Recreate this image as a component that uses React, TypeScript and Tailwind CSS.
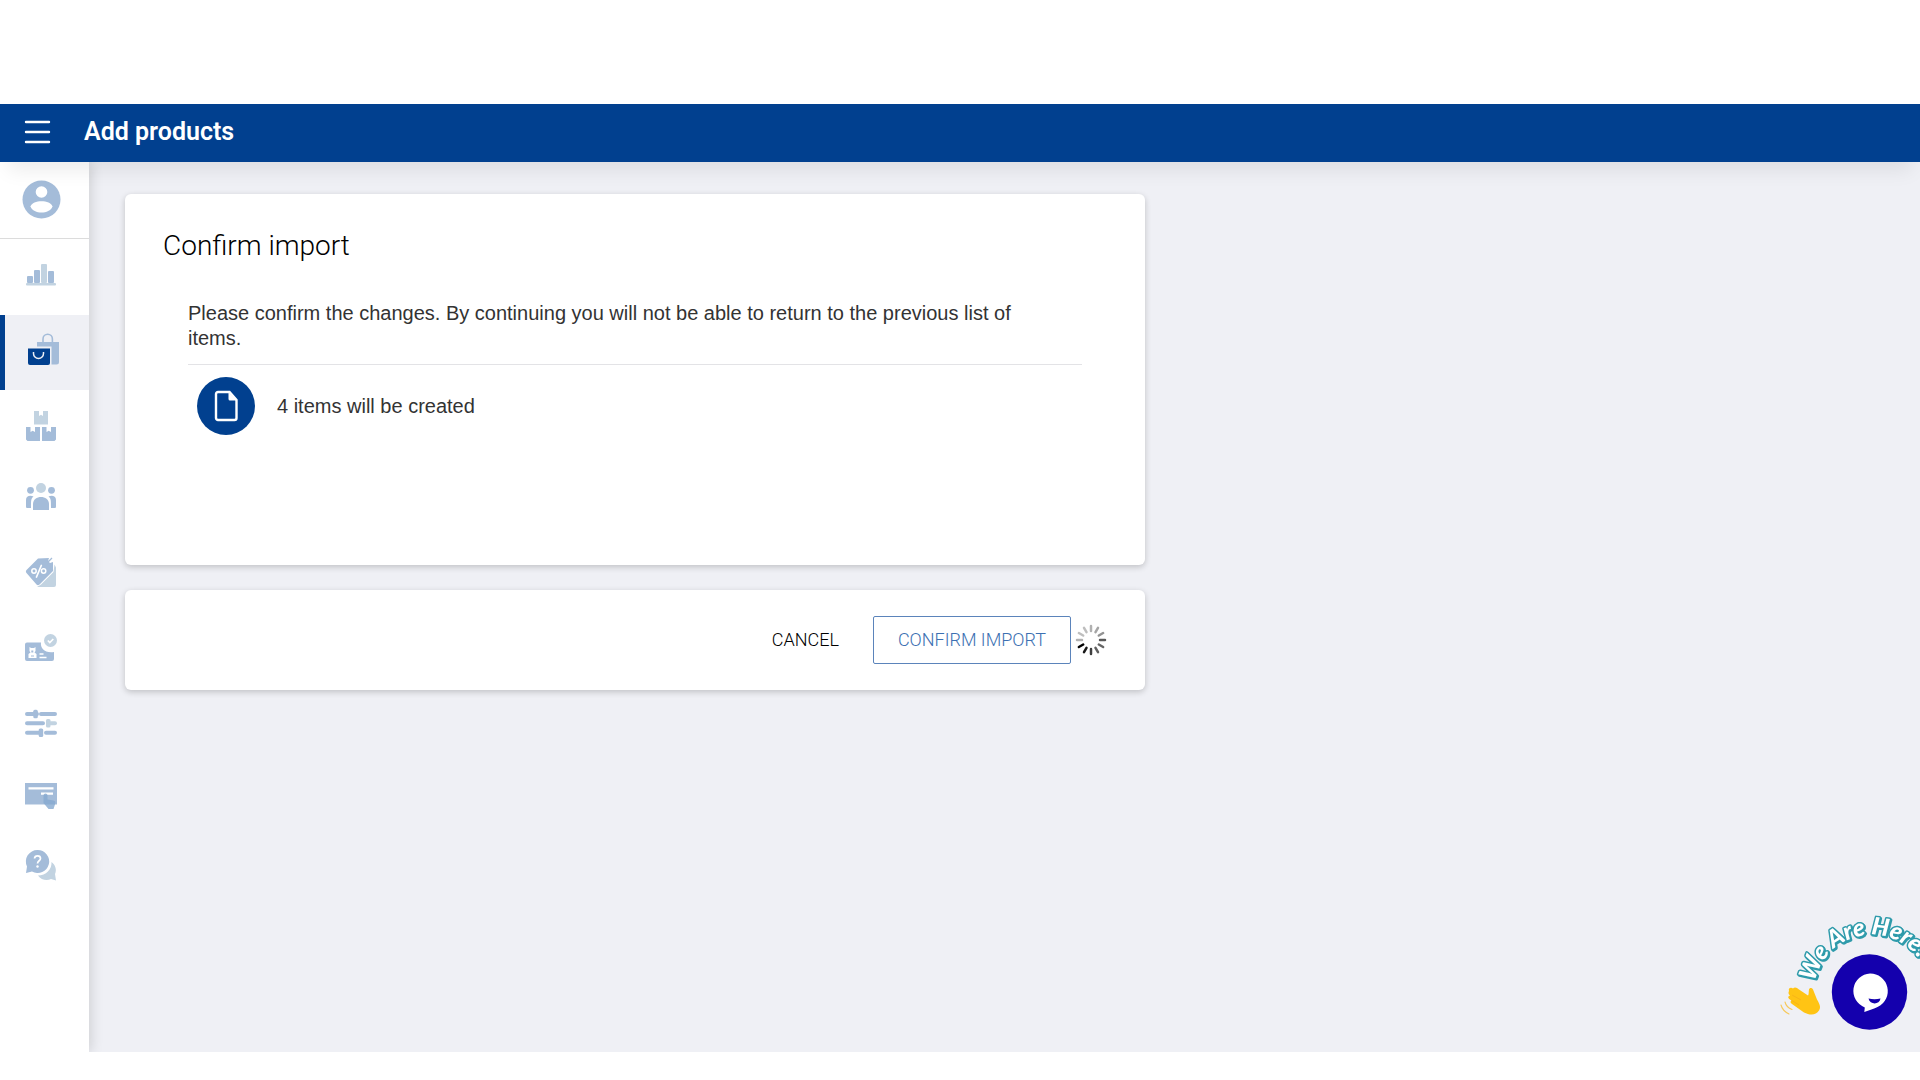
import React from "react";

const BLUE = "#a4bcd9";
const PALE = "#c2d3e1";

interface NavItem {
  label: string;
  active?: boolean;
  className: string;
  icon: React.ReactNode;
}

const navItems: NavItem[] = [
  {
    label: "Reports",
    className: "h-[76px]",
    icon: (
      <>
        <rect x="27" y="37" width="6" height="7" rx="1" fill={BLUE} />
        <rect x="34" y="31" width="6" height="13" rx="1" fill={BLUE} />
        <rect x="41" y="25" width="6" height="19" rx="1" fill={PALE} />
        <rect x="48" y="32" width="6" height="12" rx="1" fill={BLUE} />
        <rect x="26" y="44" width="30" height="2.500" rx="1" fill={PALE} />
      </>
    ),
  },
  {
    label: "Items",
    active: true,
    className: "h-[75px] bg-[#eff0f5] border-l-[5px] border-[#01408f] *:-ml-[5px]",
    icon: (
      <>
        <path d="M37 27h22v20a2.500 2.500 0 0 1-2.500 2.500H37z" fill={BLUE} />
        <path d="M43 27v-3a4.700 4.700 0 0 1 9.400 0v3" fill="none" stroke={BLUE} strokeWidth="1.600" />
        <path d="M26.500 31.500h25v19h-25z" fill="#eff0f5" />
        <path d="M28 33.500h22v14.500a2 2 0 0 1-2 2H30a2 2 0 0 1-2-2z" fill="#01408f" />
        <path d="M33.500 37v1.500a5 5 0 0 0 10 0v-1.500" fill="none" stroke="#eff0f5" strokeWidth="1.500" />
      </>
    ),
  },
  {
    label: "Inventory",
    className: "h-[74px]",
    icon: (
      <>
        <path d="M34 21h5v5l2-1.200 2 1.200v-5h5v13.500H34z" fill={PALE} />
        <path d="M26 37h4.500v5l2.200-1.200L35 42v-5h5v14H27.500L26 49.500z" fill={BLUE} />
        <path d="M42 37h4.500v5l2.200-1.200L51 42v-5h5v12.500L54.500 51H42z" fill={BLUE} />
      </>
    ),
  },
  {
    label: "Employees",
    className: "h-[74px]",
    icon: (
      <>
        <circle cx="41" cy="24" r="5" fill={PALE} />
        <circle cx="30.500" cy="26.300" r="3.400" fill={BLUE} />
        <circle cx="51.500" cy="26.300" r="3.400" fill={BLUE} />
        <path d="M33 46v-6c0-9.500 16-9.500 16 0v6z" fill={BLUE} />
        <path d="M33.500 32.500c-2.500 1.800-2.500 4-2.500 11.500h-4c-1 0-1-1-1-2v-6c0-4 4-5 7.500-3.500z" fill={BLUE} />
        <path d="M48.500 32.500c2.500 1.800 2.500 4 2.500 11.500h4c1 0 1-1 1-2v-6c0-4-4-5-7.500-3.500z" fill={BLUE} />
      </>
    ),
  },
  {
    label: "Discounts",
    className: "h-[74px]",
    icon: (
      <>
        <path d="M54.500 26.500l1.500 3V47a2 2 0 0 1-2 2H37l4-2.500L53.500 34z" fill={PALE} />
        <path d="M38 20.500L49 20l-1 3 2 2 3-1v9L39.500 46.500c-1 1-2 1-3 0L26.500 35c-.8-1-.8-2 0-3z" fill={BLUE} />
        <path d="M47 25l5-5M48 22.500v3.500h3" fill="none" stroke={BLUE} strokeWidth="1.300" />
        <path d="M41.300 27.500L36.500 39" fill="none" stroke="#fff" strokeWidth="1.700" strokeLinecap="round" />
        <circle cx="34" cy="33" r="2.200" fill="none" stroke="#fff" strokeWidth="1.500" />
        <circle cx="43.600" cy="33" r="2.200" fill="none" stroke="#fff" strokeWidth="1.500" />
      </>
    ),
  },
  {
    label: "Loyalty",
    className: "h-[74px]",
    icon: (
      <>
        <path d="M27 30.500h14c-1 5.500 4 11 13 9.500v7a2 2 0 0 1-2 2H27a2 2 0 0 1-2-2v-14.500a2 2 0 0 1 2-2z" fill={BLUE} />
        <circle cx="50.500" cy="28.500" r="6.500" fill={PALE} />
        <path d="M47.800 28.500l2 2 3.500-3.500" fill="none" stroke="#fff" strokeWidth="1.700" />
        <path d="M29.500 35l1.500 1h3l1.500-1v4l-1 1.500 2 1.500v4h-8v-4l2-1.500-1-1.500z" fill="#fff" />
        <path d="M31.300 38.500h2v2h-2zM31 43.500h3v1h-3z" fill={BLUE} />
        <path d="M39.500 42h4M39.500 45.500h7" fill="none" stroke="#fff" strokeWidth="1.400" />
      </>
    ),
  },
  {
    label: "Settings",
    className: "h-[74px]",
    icon: (
      <>
        <path d="M27 28h10M41 28h14M27 37.300h16M27 46.700h13M46 46.700h9" stroke={BLUE} strokeWidth="4" strokeLinecap="round" />
        <path d="M50 37.300h5" stroke={PALE} strokeWidth="4" strokeLinecap="round" />
        <rect x="33.300" y="23.700" width="4.500" height="8.500" rx="1.500" fill={BLUE} />
        <rect x="46" y="33" width="4.500" height="8.500" rx="1.500" fill={PALE} />
        <rect x="38.700" y="42.400" width="4.500" height="8.500" rx="1.500" fill={BLUE} />
      </>
    ),
  },
  {
    label: "Integrations",
    className: "h-[74px]",
    icon: (
      <>
        <path d="M25 23h32v21.500H25z" fill={BLUE} />
        <path d="M28.500 28.300h25M41 33.700h12" fill="none" stroke="#fff" strokeWidth="2.200" />
        <path d="M43.500 35.500a2 2 0 0 1 4 0v4l6 1c2 .5 2 1.500 1.500 4l-1.500 4.500h-5l-5-6z" fill="#86a9cf" opacity="0.800" />
      </>
    ),
  },
  {
    label: "Help",
    className: "h-[74px]",
    icon: (
      <>
        <path d="M51.500 28c4 3 5.500 8 3.500 12l1 6.500-5-1.500c-4 2-10 1-13-3.500 8 0 14-6 13.500-13.500z" fill={PALE} />
        <path d="M37.500 16a11.500 11.500 0 1 1-5.500 21.500L26 39l1-6.500A11.500 11.500 0 0 1 37.500 16z" fill={BLUE} />
        <path d="M34.500 24.500c.3-3.500 6-3.500 6 0 0 2.300-3 2.300-3 5" fill="none" stroke="#fff" strokeWidth="1.700" />
        <circle cx="37.500" cy="32.500" r="1.200" fill="#fff" />
      </>
    ),
  },
];

const Sidebar = () => {
  return (
    <aside className="relative w-[89px] shrink-0 bg-white shadow-[2px_0_12px_rgba(0,0,0,0.14)]">
      <a
        href="#account"
        aria-label="Account"
        className="block h-[77px] overflow-hidden border-b border-[#dcdcdc]"
      >
        <svg viewBox="0 0 90 76" className="w-[90px] h-[76px] max-w-none">
          <circle cx="41.500" cy="37.500" r="19" fill={BLUE} />
          <circle cx="41.500" cy="30" r="5.800" fill="#fff" />
          <path d="M30.500 44.500c2-7 20-7 22 0-3 8-19 8-22 0z" fill="#fff" />
        </svg>
      </a>
      <nav>
        {navItems.map((item) => (
          <a
            key={item.label}
            href="#nav"
            aria-label={item.label}
            aria-current={item.active ? "page" : undefined}
            className={`block overflow-hidden ${item.className}`}
          >
            <svg viewBox="0 0 90 74" className="w-[90px] h-[74px] max-w-none">
              {item.icon}
            </svg>
          </a>
        ))}
      </nav>
    </aside>
  );
};

const spokes = [0.3, 0.35, 0.42, 0.65, 0.6, 0.62, 0.75, 0.9, 1, 0.3, 0.25, 0.25];

const Spinner = () => (
  <svg viewBox="-16 -16 32 32" className="w-8 h-8" role="img" aria-label="Loading">
    {spokes.map((opacity, i) => (
      <line
        key={i}
        x1="0"
        y1="-9"
        x2="0"
        y2="-14"
        stroke="#000"
        strokeWidth="2.500"
        strokeLinecap="round"
        opacity={opacity}
        transform={`rotate(${i * 30})`}
      />
    ))}
  </svg>
);

const ChatWidget = () => (
  <button
    type="button"
    aria-label="Open chat"
    className="absolute right-0 bottom-0 z-20 w-[150px] h-[152px] cursor-pointer"
  >
    <svg viewBox="0 0 150 152" className="w-full h-full">
      <defs>
        <path id="arc" d="M45 82A58 58 0 0 1 160 92.500" />
      </defs>
      <text
        fontFamily="Lato, sans-serif"
        fontWeight="900"
        fontStyle="italic"
        fontSize="24"
        fill="#fff"
        stroke="#2f9bab"
        strokeWidth="3"
        strokeLinejoin="round"
        paintOrder="stroke"
        className="drop-shadow-[1px_1px_0_#2f9bab]"
      >
        <textPath href="#arc">We Are Here!</textPath>
      </text>

      <path
        d="M19 91c-1-3 2-4 4-2.500 2-2 4-.5 6 1l9 6c1-1 .5-3 1-6 .5-2 3-2 4 0l4 10c3 5 4 8 2 11-3 5-9 5-15 2L22 104c-2-1-2-3 0-3.500-4-1.500-5-4-2-5-1.500-1-2-3-1-4.500z"
        fill="#ffc414"
      />
      <path
        d="M22 95l9 5M21 100l8 5"
        fill="none"
        stroke="#f5ae1b"
        strokeWidth="0.700"
      />
      <path
        d="M15 102c1 4 3 6 7 7.500M11 105c1 4 4 7 8 9"
        fill="none"
        stroke="#f6c95c"
        strokeWidth="1.100"
        strokeLinecap="round"
      />

      <circle cx="99.500" cy="92" r="37.700" fill="#1400ad" />
      <path
        d="M100 73.500a17.500 17.500 0 0 1 8 33.200c-4 2-9 3.500-13.700 5.300l.5-4.600A17.500 17.500 0 0 1 100 73.500z"
        fill="#fff"
      />
      <path d="M98.500 98.500c4 1 8 1 12 0-1 6.500-10.500 6.500-12 0z" fill="#1400ad" />
    </svg>
  </button>
);

const App = () => {
  return (
    <div className="flex min-h-screen flex-col bg-white pt-[104px] pb-7 font-[Roboto,sans-serif]">
      <header className="relative z-20 flex h-[58px] items-center bg-[#01408f] pb-0.5 pl-6 shadow-[0_16px_20px_-8px_rgba(0,0,0,0.08)]">
        <button type="button" aria-label="Menu" className="cursor-pointer">
          <svg viewBox="0 0 28 24" className="w-7 h-6">
            <path
              d="M2 2h23M2 12h23M2 22h23"
              stroke="#fff"
              strokeWidth="2.400"
              strokeLinecap="round"
            />
          </svg>
        </button>
        <h1 className="ml-8 text-[25px] leading-8 font-semibold text-white">
          Add products
        </h1>
      </header>

      <div className="relative flex flex-1 overflow-hidden bg-[#eff0f5]">
        <Sidebar />

        <main className="flex-1 pl-9 pt-8 pr-6 pb-8">
          <div className="flex w-full max-w-[1020px] flex-col gap-[25px]">
            <section className="rounded-md bg-white px-[38px] pt-9 pb-[130px] shadow-[0_2px_6px_rgba(0,0,0,0.2)]">
              <h2 className="text-[28px] leading-8 font-light text-black">
                Confirm import
              </h2>

              <div className="mt-[39px] px-[25px] font-['Liberation_Sans',Arial,sans-serif] text-xl leading-[25px] text-[#333]">
                <p className="border-b border-[#e3e3e6] pr-10 pb-[13px]">
                  Please confirm the changes. By continuing you will not be able
                  to return to the previous list of items.
                </p>
                <div className="flex items-center gap-[22px] pl-[9px] pt-3">
                  <span className="flex h-[58px] w-[58px] items-center justify-center rounded-full bg-[#01408f]">
                    <svg viewBox="0 0 26 34" className="w-[26px] h-[34px]">
                      <path
                        d="M5 3h11.500l7 8v18a2 2 0 0 1-2 2H5a2 2 0 0 1-2-2V5a2 2 0 0 1 2-2z"
                        fill="none"
                        stroke="#fff"
                        strokeWidth="2.400"
                      />
                      <path d="M15.500 3l8 8.500h-6.500a1.500 1.500 0 0 1-1.500-1.500z" fill="#fff" />
                    </svg>
                  </span>
                  <p>4 items will be created</p>
                </div>
              </div>
            </section>

            <section className="flex items-center justify-end rounded-md bg-white py-[26px] pr-[38px] shadow-[0_2px_6px_rgba(0,0,0,0.2)]">
              <button
                type="button"
                className="cursor-pointer px-[34px] text-lg font-light text-black"
              >
                CANCEL
              </button>
              <button
                type="button"
                className="h-12 cursor-pointer rounded-xs border border-[#5b84bb] px-6 text-lg font-light text-[#3c70b2]"
              >
                CONFIRM IMPORT
              </button>
              <span className="ml-1">
                <Spinner />
              </span>
            </section>
          </div>
        </main>

        <ChatWidget />
      </div>
    </div>
  );
};

export default App;
